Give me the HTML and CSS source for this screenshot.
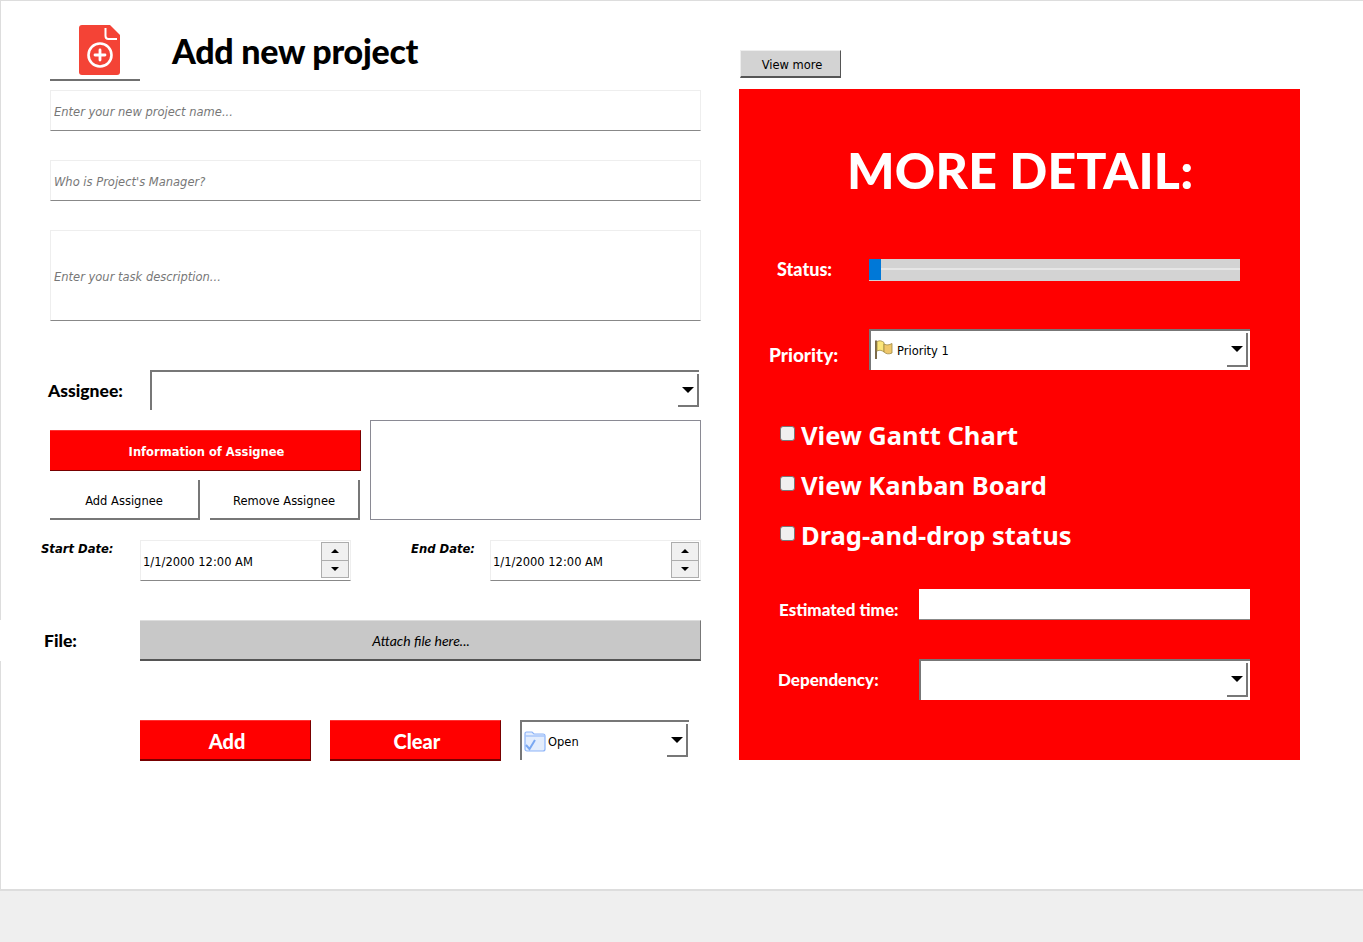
FILE: index.html
```html
<!DOCTYPE html>
<html lang="en">
<head>
<meta charset="utf-8">
<title>Add new project</title>
<link rel="stylesheet" href="styles.css">
</head>
<body>
<div class="window">
  <main class="form">
    <header class="head">
      <div class="logo">
        <svg class="logo-icon" viewBox="0 0 41 50" width="41" height="50" aria-hidden="true">
          <path d="M3 0H31L41 10V47a3 3 0 0 1-3 3H3a3 3 0 0 1-3-3V3a3 3 0 0 1 3-3Z" fill="#f44336"/>
          <path d="M26.5 3V11a3 3 0 0 0 3 3H38" fill="none" stroke="#fff" stroke-width="2"/>
          <circle cx="21" cy="30" r="11.5" fill="none" stroke="#fff" stroke-width="2.6"/>
          <path d="M21 25V35M16 30H26" stroke="#fff" stroke-width="2.8" stroke-linecap="round"/>
        </svg>
      </div>
      <h1 class="title">Add new project</h1>
    </header>

    <input class="field field-first" type="text" placeholder="Enter your new project name...">
    <input class="field field-next" type="text" placeholder="Who is Project's Manager?">
    <div class="field field-next field-tall"><span class="hint">Enter your task description...</span></div>

    <div class="assignee-row">
      <label class="assignee-label">Assignee:</label>
      <div class="combo combo-assignee">
        <span class="combo-value"></span>
        <span class="combo-btn"><i class="arrow"></i></span>
      </div>
    </div>

    <section class="assignee-block">
      <div class="assignee-actions">
        <button class="btn-red btn-info" type="button">Information of Assignee</button>
        <div class="assignee-btns">
          <button class="btn-plain" type="button">Add Assignee</button>
          <button class="btn-plain" type="button">Remove Assignee</button>
        </div>
      </div>
      <div class="assignee-box"></div>
    </section>

    <div class="date-row">
      <label class="date-label date-label-start">Start Date:</label>
      <div class="date-field">
        <span class="date-text">1/1/2000 12:00 AM</span>
        <span class="spin"><b class="spin-btn"><i class="tri-up"></i></b><b class="spin-btn"><i class="tri-down"></i></b></span>
      </div>
      <label class="date-label date-label-end">End Date:</label>
      <div class="date-field">
        <span class="date-text">1/1/2000 12:00 AM</span>
        <span class="spin"><b class="spin-btn"><i class="tri-up"></i></b><b class="spin-btn"><i class="tri-down"></i></b></span>
      </div>
    </div>

    <div class="file-row">
      <label class="file-label">File:</label>
      <button class="btn-file" type="button">Attach file here...</button>
    </div>

    <div class="action-row">
      <button class="btn-red btn-big" type="button">Add</button>
      <button class="btn-red btn-big" type="button">Clear</button>
      <div class="combo combo-open">
        <svg class="combo-icon" viewBox="0 0 22 22" width="22" height="22" aria-hidden="true">
          <path d="M1 3.5A1.5 1.5 0 0 1 2.5 2H8l2 2h9a2 2 0 0 1 2 2v13a2 2 0 0 1-2 2H3a2 2 0 0 1-2-2Z" fill="#e3edfd" stroke="#8db4f8" stroke-width="1.2"/>
          <path d="M1 6H21" stroke="#a9c6fa" stroke-width="1.5"/>
          <path d="M2 15l3.5 4L11 10" fill="none" stroke="#7aa8f2" stroke-width="2"/>
        </svg>
        <span class="combo-value combo-text">Open</span>
        <span class="combo-btn"><i class="arrow"></i></span>
      </div>
    </div>
  </main>

  <aside class="side">
    <button class="btn-more" type="button">View more</button>
    <section class="panel">
      <h2 class="panel-title">MORE DETAIL:</h2>

      <div class="row row-status">
        <label class="row-label label-status">Status:</label>
        <div class="progress"><div class="progress-fill"></div></div>
      </div>

      <div class="row row-priority">
        <label class="row-label label-priority">Priority:</label>
        <div class="combo combo-priority">
          <svg class="combo-icon combo-flag" viewBox="0 0 20 21" width="20" height="21" aria-hidden="true">
            <path d="M2 1.5V20" stroke="#7b6a4a" stroke-width="2"/>
            <path d="M3 2.5C6 1 8 2 10 3.5V13C8 11.5 6 10.5 3 12Z" fill="#fbe67a" stroke="#a08a45" stroke-width=".8"/>
            <path d="M10 5C13 6.5 15 6 18 4.5V14C15 15.5 12 15 10 13Z" fill="#efc76b" stroke="#a08a45" stroke-width=".8"/>
          </svg>
          <span class="combo-value combo-text combo-text-flag">Priority 1</span>
          <span class="combo-btn"><i class="arrow"></i></span>
        </div>
      </div>

      <div class="checks">
        <label class="check"><input class="check-box" type="checkbox"><span>View Gantt Chart</span></label>
        <label class="check"><input class="check-box" type="checkbox"><span>View Kanban Board</span></label>
        <label class="check"><input class="check-box" type="checkbox"><span>Drag-and-drop status</span></label>
      </div>

      <div class="row row-estimate">
        <label class="row-label label-estimate">Estimated time:</label>
        <input class="estimate-input" type="text">
      </div>

      <div class="row row-dependency">
        <label class="row-label label-dependency">Dependency:</label>
        <div class="combo combo-dependency">
          <span class="combo-value"></span>
          <span class="combo-btn"><i class="arrow"></i></span>
        </div>
      </div>
    </section>
  </aside>
</div>
</body>
</html>
```
FILE: styles.css
```css
* { box-sizing: border-box; }

html, body { margin: 0; height: 100%; }

body {
  background: #efefef;
  font-family: "DejaVu Sans", sans-serif;
  font-size: 11.5px;
  color: #000;
  overflow: hidden;
}

button { font-family: inherit; padding: 0; cursor: pointer; }

.window {
  display: flex;
  height: 891px;
  background: #fff;
  border-top: 1px solid #ddd;
  border-left: 1px solid #ddd;
  border-bottom: 2px solid #ddd;
}

/* Left form */
.form {
  display: flex;
  flex-direction: column;
  width: 661px;
  margin-left: 39px;
  padding-left: 10px;
}

.head { display: flex; height: 80px; }

.logo {
  width: 90px;
  height: 80px;
  padding: 24px 0 0 29px;
  border-bottom: 2px solid #707070;
}
.logo-icon { display: block; }

.title {
  margin: 28px 0 0 32px;
  font: 900 34px/44px "Lato", sans-serif;
  letter-spacing: -0.28px;
  white-space: nowrap;
}

.field {
  display: block;
  width: 651px;
  height: 41px;
  padding: 2px 3px 0;
  border: 1px solid #eee;
  border-bottom: 1px solid #888;
  background: #fff;
  outline: 0;
  font: italic 11.5px "DejaVu Sans", sans-serif;
}
.field::placeholder { color: #777; opacity: 1; }
.field-first { margin-top: 9px; }
.field-next { margin-top: 29px; }
.field-tall { display: flex; align-items: center; height: 91px; }
.hint { color: #777; }

.assignee-row { display: flex; height: 40px; margin-top: 49px; }
.assignee-label {
  width: 100px;
  margin-left: -2px;
  margin-right: 2px;
  font: 900 17.5px/42px "Lato", sans-serif;
}

/* Dropdown */
.combo {
  display: flex;
  align-items: center;
  border-top: 2px solid #777;
  border-left: 2px solid #777;
  padding: 2px 2px 3px 0;
  background: #fff;
  color: #000;
}
.combo-assignee { width: 549px; padding-right: 0; }
.combo-open { width: 169px; height: 40px; padding-right: 1px; }
.combo-priority { width: 381px; height: 41px; padding-left: 1px; }
.combo-dependency { width: 331px; height: 41px; }
.combo-value { flex: 1; padding-top: 2px; }
.combo-text { margin-left: 2px; }
.combo-text-flag { margin-left: 3px; }
.combo-icon { flex: none; margin-left: 2px; }
.combo-flag { margin-top: -2px; }
.combo-btn {
  display: flex;
  justify-content: center;
  flex: none;
  width: 21px;
  height: 100%;
  padding-top: 13px;
  border-right: 2px solid #777;
  border-bottom: 2px solid #777;
}
.arrow {
  width: 0;
  height: 0;
  border-left: 6px solid transparent;
  border-right: 6px solid transparent;
  border-top: 6px solid #000;
}

/* Assignee block */
.assignee-block { display: flex; height: 100px; margin-top: 10px; }
.assignee-actions { width: 320px; padding-top: 10px; }
.assignee-box {
  width: 331px;
  border: 1px solid #8a8a94;
}
.assignee-btns { display: flex; gap: 10px; margin-top: 9px; }

.btn-red {
  background: #f00;
  color: #fff;
  border: 0;
  border-right: 1px solid #700;
  border-bottom: 1px solid #700;
  border-top: 1px solid #f33;
}
.btn-info {
  display: block;
  width: 311px;
  height: 41px;
  padding: 2px 0 0 3px;
  font: 700 11.5px "DejaVu Sans", sans-serif;
}
.btn-plain {
  width: 150px;
  height: 40px;
  padding-top: 4px;
  background: #fff;
  border: 0;
  border-right: 2px solid #777;
  border-bottom: 2px solid #777;
  font-size: 11.5px;
  color: #000;
}

/* Dates */
.date-row { display: flex; height: 41px; margin-top: 20px; margin-left: -10px; }
.date-label {
  font: italic 700 11.6px/19px "DejaVu Sans", sans-serif;
  white-space: nowrap;
}
.date-label-start { width: 100px; padding-left: 1px; }
.date-label-end { width: 139px; padding-left: 60px; }
.date-field {
  display: flex;
  align-items: center;
  justify-content: space-between;
  width: 211px;
  padding: 1px 1px 2px 2px;
  border: 1px solid #eee;
  border-bottom: 1px solid #888;
}
.date-text { padding-top: 3px; }
.spin { display: flex; flex-direction: column; width: 28px; height: 36px; }
.spin-btn {
  display: flex;
  align-items: center;
  justify-content: center;
  flex: 1;
  background: #f0f0f0;
  border: 1px solid #adadad;
}
.spin-btn + .spin-btn { border-top: 0; }
.tri-up, .tri-down { width: 0; height: 0; border-left: 4px solid transparent; border-right: 4px solid transparent; }
.tri-up { border-bottom: 4px solid #000; }
.tri-down { border-top: 4px solid #000; }

/* File */
.file-row {
  display: flex;
  height: 41px;
  margin-top: 39px;
  margin-left: -50px;
  padding-left: 44px;
  background: linear-gradient(#fff, #fff) left / 140px 100% no-repeat;
}
.file-label { width: 96px; font: 900 17.5px/42px "Lato", sans-serif; }
.btn-file {
  width: 561px;
  height: 41px;
  padding-left: 2px;
  background: #c8c8c8;
  border: 0;
  border-top: 1px solid #ddd;
  border-right: 1px solid #777;
  border-bottom: 2px solid #555;
  font: italic 14px "Lato", sans-serif;
  color: #000;
}

/* Actions */
.action-row { display: flex; height: 41px; margin-top: 59px; margin-left: 90px; }
.btn-big {
  width: 171px;
  height: 41px;
  margin-right: 19px;
  padding: 2px 0 0 4px;
  font: 900 20px "Lato", sans-serif;
  border-bottom-width: 2px;
}

/* Right side */
.side { width: 561px; margin-left: 38px; }
.btn-more {
  display: block;
  width: 101px;
  height: 28px;
  margin: 49px 0 0 1px;
  padding: 2px 0 0 3px;
  background: #d3d3d3;
  border: 0;
  border-top: 1px solid #eee;
  border-left: 1px solid #eee;
  border-right: 1px solid #555;
  border-bottom: 2px solid #555;
  font-size: 11.5px;
  color: #000;
}
.panel {
  height: 671px;
  margin-top: 11px;
  padding-top: 52px;
  background: #f00;
  color: #fff;
}
.panel-title {
  margin: 0;
  height: 60px;
  padding-left: 108px;
  font: 900 50px/58px "Lato", sans-serif;
  letter-spacing: 0.2px;
  white-space: nowrap;
}
.row { display: flex; align-items: center; }
.row-label { flex: none; font: 900 17px "Lato", sans-serif; white-space: nowrap; }

.row-status { height: 22px; margin-top: 58px; }
.label-status { width: 130px; padding-left: 38px; padding-bottom: 2px; font-size: 18px; }
.progress {
  width: 371px;
  height: 22px;
  background: linear-gradient(#d3d3d3 9px, #e6e6e6 9px, #e6e6e6 11px, #d3d3d3 11px);
}
.progress-fill { width: 12px; height: 21px; background: #0078d7; }

.row-priority { height: 41px; margin-top: 48px; }
.label-priority { width: 130px; padding-left: 30px; padding-top: 10px; font-size: 19px; }

.checks { display: flex; flex-direction: column; gap: 20px; margin-top: 50px; padding-left: 41px; }
.check {
  display: flex;
  align-items: center;
  height: 30px;
  font: 700 25.5px/32px "Noto Sans", sans-serif;
  white-space: nowrap;
}
.check-box {
  appearance: none;
  flex: none;
  width: 15px;
  height: 15px;
  margin: 0 6px 3px 0;
  background: #f0f0f0;
  border: 1px solid #777;
  border-radius: 3px;
}

.row-estimate { height: 31px; margin-top: 39px; }
.label-estimate { width: 180px; padding-left: 40px; padding-top: 10px; }
.estimate-input {
  width: 331px;
  height: 31px;
  background: #fff;
  border: 0;
  border-bottom: 1px solid #888;
  outline: 0;
}

.row-dependency { height: 41px; margin-top: 39px; }
.label-dependency { width: 180px; padding-left: 39px; }
```
